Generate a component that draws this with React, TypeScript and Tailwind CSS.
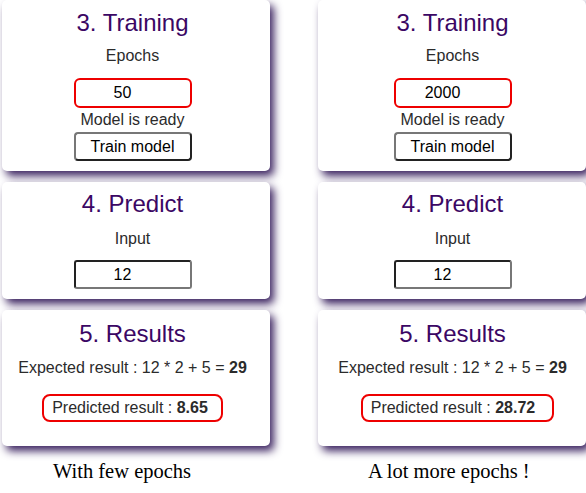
import React from 'react';

type Props = {
  epochs: string;
  predicted: string;
  left?: boolean;
};

const card =
  'bg-white rounded-[5px] shadow-[4px_5px_8px_#3b2360] flex flex-col items-center text-[#2b2b2b]';

function NumberBox({ value, red }: { value: string; red?: boolean }) {
  return (
    <div
      className={
        red
          ? 'w-[118px] h-[30px] rounded-[6px] border-2 border-[#ee0000] flex items-center justify-center pr-[20px] text-black'
          : 'w-[118px] h-[29px] rounded-[3px] border-2 border-t-[#222] border-l-[#222] border-b-[#777] border-r-[#777] flex items-center justify-center pr-[20px] text-black'
      }
    >
      {value}
    </div>
  );
}

function Column({ epochs, predicted, left }: Props) {
  // the left screenshot's content sits a few px left of the card centre
  const shift = left ? 'pr-[7px]' : 'pl-[1px]';
  return (
    <div className="w-[268px] flex flex-col gap-[11px]">
      {/* Training */}
      <div className={`${card} ${shift} h-[171px] pt-[9px]`}>
        <h2 className="text-[24px] leading-[28px] text-[#3b0764]">3. Training</h2>
        <p className="mt-[7px] leading-[24px]">Epochs</p>
        <div className="mt-[10px]">
          <NumberBox value={epochs} red />
        </div>
        <p className="leading-[24px]">Model is ready</p>
        <button className="w-[118px] h-[29px] rounded-[4px] border-2 border-t-[#777] border-l-[#777] border-b-[#222] border-r-[#222] text-black bg-white">
          Train model
        </button>
      </div>

      {/* Predict */}
      <div className={`${card} ${shift} h-[117px] pt-[8px]`}>
        <h2 className="text-[24px] leading-[28px] text-[#3b0764]">4. Predict</h2>
        <p className="mt-[9px] leading-[24px]">Input</p>
        <div className="mt-[9px]">
          <NumberBox value="12" />
        </div>
      </div>

      {/* Results */}
      <div className={`${card} ${shift} h-[136px] pt-[10px]`}>
        <h2 className="text-[24px] leading-[28px] text-[#3b0764]">5. Results</h2>
        <p className="mt-[8px] leading-[24px]">
          Expected result : 12 * 2 + 5 = <b>29</b>
        </p>
        <div
          className={`mt-[14px] h-[28px] rounded-[8px] border-2 border-[#ee0000] pl-[8px] flex items-center leading-[24px] ${
            left ? 'pr-[13px]' : 'ml-[10px] pr-[17px]'
          }`}
        >
          <span>
            Predicted result : <b>{predicted}</b>
          </span>
        </div>
      </div>
    </div>
  );
}

export default function App() {
  return (
    <div
      className="w-[586px] h-[493px] bg-white overflow-hidden"
      style={{ fontFamily: '"Liberation Sans", Arial, sans-serif' }}
    >
      <div className="flex pl-[2px] gap-[48px] text-[16px]">
        <Column epochs="50" predicted="8.65" left />
        <Column epochs="2000" predicted="28.72" />
      </div>
      <div
        className="flex mt-[12px] text-[20.5px] leading-[26px] text-black"
        style={{ fontFamily: '"Liberation Serif", "Times New Roman", serif' }}
      >
        <span className="ml-[53px] w-[315px]">With few epochs</span>
        <span>A lot more epochs !</span>
      </div>
    </div>
  );
}
